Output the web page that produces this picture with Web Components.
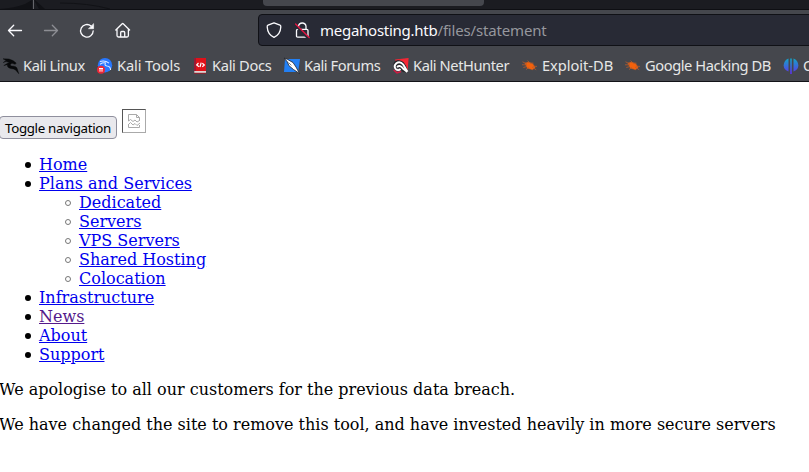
<!DOCTYPE html>
<html lang="en">
<head>
<meta charset="utf-8">
<title>megahosting.htb</title>
<style>
html,body{margin:0;background:#fff}
body{width:809px;height:472px;overflow:hidden}
</style>
</head>
<body>
<browser-window></browser-window>
<script>
const define = (name, html) => customElements.define(name, class extends HTMLElement {
  constructor() {
    super();
    const t = document.createElement('template');
    t.innerHTML = html;
    this.attachShadow({ mode: 'open' }).append(t.content.cloneNode(true));
  }
});

define('tab-strip', `
<style>
:host{display:flex;height:10px;background:#1b1c21;overflow:hidden;box-sizing:border-box;border-bottom:1px solid #0e0f13}
svg{flex:none;width:263px;height:9px}
.tab{width:221px;height:6px;background:#45474d;border-radius:0 0 4px 4px}
</style>
<svg viewBox="0 0 263 9"><path d="M0 9Q15 8 25 4L32 0V9Z M35 0L45 9H39L34 0Z" fill="#111216"/><path d="M60 3Q88 3 110 9" fill="none" stroke="#111216"/><path d="M33.5 0V9" stroke="#65666b"/></svg>
<div class="tab"></div>`);

define('nav-bar', `
<style>
:host{display:flex;height:40px;background:#45474d;padding:4px 0 4px 7px;box-sizing:border-box;overflow:hidden}
.buttons{display:flex;gap:20px;align-items:center;width:251px;flex:none}
svg{width:16px;height:16px;flex:none;fill:none;stroke:#fbfbfe;stroke-width:1.3;stroke-linecap:round;stroke-linejoin:round;overflow:visible}
.off{opacity:.4}
.url{flex:1;box-sizing:border-box;height:32px;margin-right:-8px;border:1px solid #101116;border-radius:4px;background:#282a35;display:flex;align-items:center;padding-left:7px;gap:12px}
.address{font:15px/20px "Noto Sans",sans-serif;letter-spacing:-.26px;color:#fbfbfe;white-space:nowrap;margin-left:-2px}
.path{color:#96979d;letter-spacing:-.17px}
</style>
<div class="buttons">
<svg viewBox="0 0 16 16"><path d="M14.5 8.5H1.5M6.7 3.2L1.5 8.5L6.7 13.7"/></svg>
<svg class="off" viewBox="0 0 16 16"><path d="M1.5 8.5H14.5M9.3 3.2L14.5 8.5L9.3 13.7"/></svg>
<svg viewBox="0 0 16 16"><path d="M12.1 4.1A6.3 6.3 0 1 0 14.2 8.8"/><path d="M14.6 2V6.7H9.8Z" fill="#fbfbfe" stroke-width=".6"/></svg>
<svg viewBox="0 0 16 16"><path d="M.8 8L7.2 1.7Q7.7 1.2 8.2 1.7L14.6 8M2 7V13.5Q2 15 3.4 15H12Q13.4 15 13.4 13.5V7M5.7 15V10.5Q5.7 9.5 6.7 9.5H8.7Q9.7 9.5 9.7 10.5V15"/></svg>
</div>
<div class="url">
<svg viewBox="0 0 16 16"><path d="M8 .8L14 3.2Q15 3.6 14.8 5Q14.4 12.5 8 15.3Q1.6 12.5 1.2 5Q1 3.6 2 3.2Z"/></svg>
<svg viewBox="0 0 16 16"><path d="M4.5 7V4.2A3.8 3.8 0 0 1 12 4.2V7M3.2 7.3H12.8Q14 7.3 14 8.5V14Q14 15.2 12.8 15.2H3.7Q2.5 15.2 2.5 14V8.5Q2.5 7.3 3.7 7.3"/><path d="M1.6 3.4L13.8 15.8" stroke="#282a35" stroke-width="2.4"/><path d="M1.6 2L15.2 15.5" stroke="#e61542" stroke-width="1.3"/></svg>
<div class="address">megahosting.htb<span class="path">/files/statement</span></div>
</div>`);

define('bookmark-item', `
<style>
:host{display:flex;align-items:center;gap:4px;white-space:nowrap;font:14.67px/20px "Noto Sans",sans-serif;letter-spacing:-.42px;color:#e7e7e7}
span{padding-bottom:1px}
::slotted(svg){width:16px;height:16px;flex:none;display:block;overflow:visible}
</style><slot name="icon"></slot><span><slot></slot></span>`);

define('bookmark-bar', `
<style>
:host{display:grid;grid-template-columns:94px 95px 92px 109px 129px 103px 158px 80px;height:32px;box-sizing:border-box;padding-left:3px;background:#45474d;border-bottom:1px solid #121318;overflow:hidden}
.t{letter-spacing:-.13px}
.d{letter-spacing:-.33px}
.x{letter-spacing:-.04px}
</style>
<bookmark-item><svg slot="icon" viewBox="0 0 16 16"><path d="M0 .8L6 1L10 2.6L13.2 5L12.2 6.3L9 5.3L7.4 6.3Q6.8 7.6 8.6 8Q13.9 8 14.4 11.2L15.8 15.8L12.6 12Q10.8 10.6 7.6 10.5Q3.8 9.4 4.4 6.7L.8 7.6L4.5 5.3L6.5 4.4L3 3.6L.2 4.6L3 2.6Z" fill="#08090b" stroke="#08090b" stroke-width=".4"/></svg>Kali Linux</bookmark-item>
<bookmark-item class="t"><svg slot="icon" viewBox="0 0 16 16"><circle cx="8" cy="7.2" r="7.2" fill="#2777ff"/><path d="M3 3.5Q8 1.9 12 5.2M3 6.2Q6 4.3 9 5M8.5 5Q7 7.6 10 8Q13.5 8.3 13.6 12" fill="none" stroke="#dceaff" stroke-width="1.1"/><circle cx="4" cy="11.7" r="4" fill="#ed2737"/><path d="M2 10.5H6M3 10.5V13.7M5 10.5V13.7" fill="none" stroke="#fff" stroke-width="1"/></svg>Kali Tools</bookmark-item>
<bookmark-item class="d"><svg slot="icon" viewBox="0 0 16 16"><path d="M2 0H14V13H2Z" fill="#df1119"/><path d="M2 0H4V13H2Z" fill="#991b35"/><path d="M2.3 13H14V15.2H2.3Z" fill="#ddd4d0"/><path d="M2 14.8H14V15.8H2Z" fill="#8d1b29"/><path d="M6.5 5L4.7 7L7 8.7M10.3 5.2L12.3 7L10.3 8.7M8 9L9.2 4.7" fill="none" stroke="#fff" stroke-width="1.2"/></svg>Kali Docs</bookmark-item>
<bookmark-item><svg slot="icon" viewBox="0 0 16 16"><path d="M1 1H16L14.2 14H0Z" fill="#2380f4"/><path d="M0 0L3.5 1.4L9 4.5L12 9L15.6 15.6L9.5 11.5L4.8 7.5L3.5 4Z" fill="#fff" stroke="#202229" stroke-width=".8"/><path d="M4.6 4.6L7.4 7.4" stroke="#59616e" stroke-width=".8"/></svg>Kali Forums</bookmark-item>
<bookmark-item><svg slot="icon" viewBox="0 0 16 16"><path d="M2 1.5L15.6 0L14.6 13L6 10Z" fill="#f52735"/><path d="M.5 7Q0 3 5 2Q10 1 12.5 6L15.5 14.5L10 14L7 11Z" fill="#24252a"/><path d="M5 1.5L14.8 .8V10L10.5 4Q8.5 2.5 5 2Z" fill="#f52735"/><path d="M3 11.5Q.2 8 3.4 5.2Q7 2.6 10.2 6.5L14.5 13.8M3 11.5Q5.5 13 7.5 11M4 9Q7.4 6.4 10 10.5L14.4 14" fill="none" stroke="#fff" stroke-width="1.9"/><path d="M.7 12L4 14.8L8 13.5" fill="none" stroke="#d31b42" stroke-width="1.5"/></svg>Kali NetHunter</bookmark-item>
<bookmark-item class="x"><svg slot="icon" viewBox="0 0 16 16"><path d="M3 5.2L6.5 4.2L11 6.2L13 9.6L10.5 11.6L5.5 10Z" fill="#f2610c" stroke="#f2610c" stroke-width=".6"/><path d="M.5 3.8L5 6M5.5 2.7L8 5L11.5 5.2M0 6.8H5M1.3 9.5L5 8.5M4 11.5L7 9.5M10 9L14.2 11.8M11 8.2L15 8.4" fill="none" stroke="#b95a2a" stroke-width=".8"/></svg>Exploit-DB</bookmark-item>
<bookmark-item><svg slot="icon" viewBox="0 0 16 16"><path d="M3 5.2L6.5 4.2L11 6.2L13 9.6L10.5 11.6L5.5 10Z" fill="#f2610c" stroke="#f2610c" stroke-width=".6"/><path d="M.5 3.8L5 6M5.5 2.7L8 5L11.5 5.2M0 6.8H5M1.3 9.5L5 8.5M4 11.5L7 9.5M10 9L14.2 11.8M11 8.2L15 8.4" fill="none" stroke="#b95a2a" stroke-width=".8"/></svg>Google Hacking DB</bookmark-item>
<bookmark-item><svg slot="icon" viewBox="0 0 16 16"><defs><linearGradient id="ring" gradientUnits="userSpaceOnUse" x1="0" y1="0" x2="0" y2="16"><stop stop-color="#10a8c4"/><stop offset="1" stop-color="#6030ed"/></linearGradient></defs><path d="M5.5 .4V13.5Q1 12 .6 7.5Q1 2 5.5 .4M10.5 .4V13.5Q15 12 15.4 7.5Q15 2 10.5 .4M7.2 .5H8.8V16H7.2Z" fill="url(#ring)"/></svg>OffSec</bookmark-item>`);

define('toggle-button', `
<style>
:host{display:block}
button{display:block;box-sizing:border-box;width:118px;height:23px;margin:0;padding:1px 0 0 5px;text-align:left;border:1px solid #8f8f9d;border-radius:4px;background:#e9e9ed;color:#000;font:13.33px/21px "Noto Sans",sans-serif;letter-spacing:-.33px;white-space:nowrap}
</style><button><slot></slot></button>`);

define('missing-image', `
<style>
:host{display:block;box-sizing:border-box;width:24px;height:24px;border:1px solid;border-color:#555 #aaa #aaa #555;padding:3px}
svg{display:block;width:16px;height:16px;fill:none;stroke:#aaa}
</style><svg viewBox="0 0 16 16"><path d="M2.5 8V1.5H10.5L13.5 4.5V8M10.5 1.5V4.5H13.5M2.5 12V14.5H13.5V12M2.5 8L4.5 6.5L7 8.5L9 7L11 9L13.5 7.5M2 12L4.5 9.5L7 12L9 10.5L11 12.5L14 10"/></svg>`);

define('menu-list', `
<style>:host{display:block;padding-left:40px}</style><slot></slot>`);

define('menu-entry', `
<style>
:host{display:block}
.row{display:flex;height:19px}
.row::before{content:"";box-sizing:border-box;flex:none;width:6px;height:6px;border-radius:50%;background:#000;margin:7px 8px 0 -14px}
:host([sub]) .row::before{background:none;border:1px solid #777}
a{color:#0000ee;text-decoration:underline}
:host([visited]) a{color:#551a8b}
</style><div class="row"><a><slot></slot></a></div><slot name="sub"></slot>`);

define('site-page', `
<style>
:host{display:block;background:#fff;color:#000;font:16px/19px "DejaVu Serif",serif;padding-top:27px;margin-left:-1px;white-space:nowrap}
.head{display:flex;height:30px;gap:5px;align-items:flex-start}
toggle-button{margin-top:7px}
menu-list.main{margin-top:16px}
p{margin:16px 0}
</style>
<div class="head"><toggle-button>Toggle navigation</toggle-button><missing-image></missing-image></div>
<menu-list class="main">
<menu-entry>Home</menu-entry>
<menu-entry>Plans and Services<menu-list slot="sub"><menu-entry sub>Dedicated</menu-entry><menu-entry sub>Servers</menu-entry><menu-entry sub>VPS Servers</menu-entry><menu-entry sub>Shared Hosting</menu-entry><menu-entry sub>Colocation</menu-entry></menu-list></menu-entry>
<menu-entry>Infrastructure</menu-entry>
<menu-entry visited>News</menu-entry>
<menu-entry>About</menu-entry>
<menu-entry>Support</menu-entry>
</menu-list>
<p>We apologise to all our customers for the previous data breach.</p>
<p>We have changed the site to remove this tool, and have invested heavily in more secure servers</p>`);

define('browser-window', `
<style>:host{display:flex;flex-direction:column;width:809px;height:472px;overflow:hidden}
site-page{flex:1}</style>
<tab-strip></tab-strip><nav-bar></nav-bar><bookmark-bar></bookmark-bar><site-page></site-page>`);
</script>
</body>
</html>
